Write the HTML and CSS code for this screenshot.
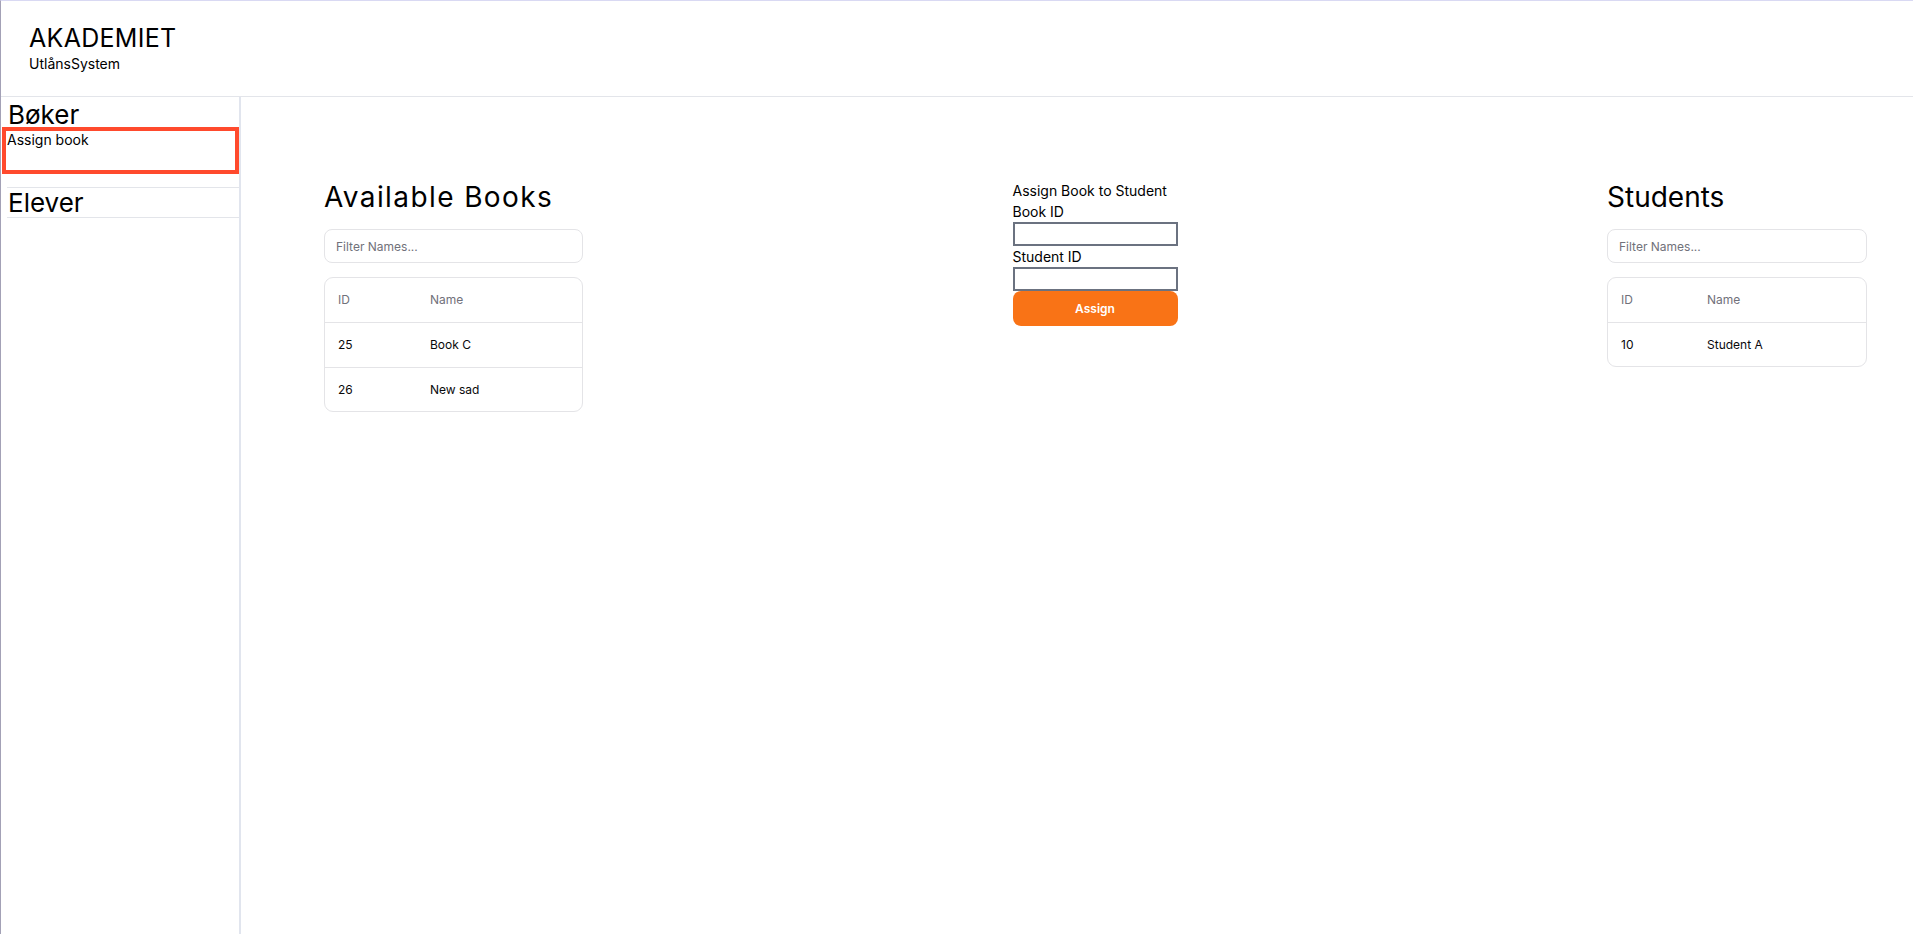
FILE: index.html
```html
<!DOCTYPE html>
<html lang="no">
<head>
<meta charset="utf-8">
<title>Akademiet – UtlånsSystem</title>
<link rel="stylesheet" href="styles.css">
</head>
<body>
<div class="app">
  <header class="topbar">
    <div class="brand">AKADEMIET</div>
    <div class="brand-sub">UtlånsSystem</div>
  </header>
  <div class="body-row">
    <nav class="sidebar">
      <div class="nav-section">
        <div class="nav-title">Bøker</div>
        <a class="nav-link active" href="#">Assign book</a>
      </div>
      <div class="nav-section nav-section-plain">
        <div class="nav-title">Elever</div>
      </div>
    </nav>
    <main class="main">
      <section class="col col-books">
        <h2 class="col-title">Available Books</h2>
        <input class="filter" type="text" placeholder="Filter Names...">
        <div class="table-wrap">
          <table class="data-table">
            <thead>
              <tr><th class="c-id-books">ID</th><th>Name</th></tr>
            </thead>
            <tbody>
              <tr><td>25</td><td>Book C</td></tr>
              <tr><td>26</td><td>New sad</td></tr>
            </tbody>
          </table>
        </div>
      </section>
      <section class="col col-form">
        <div class="form-title">Assign Book to Student</div>
        <label class="form-label" for="bookId">Book ID</label>
        <input class="form-input" id="bookId" type="text">
        <label class="form-label" for="studentId">Student ID</label>
        <input class="form-input" id="studentId" type="text">
        <button class="btn-assign" type="button">Assign</button>
      </section>
      <section class="col col-students">
        <h2 class="col-title">Students</h2>
        <input class="filter" type="text" placeholder="Filter Names...">
        <div class="table-wrap">
          <table class="data-table">
            <thead>
              <tr><th class="c-id-students">ID</th><th>Name</th></tr>
            </thead>
            <tbody>
              <tr><td>10</td><td>Student A</td></tr>
            </tbody>
          </table>
        </div>
      </section>
    </main>
  </div>
</div>
</body>
</html>
```
FILE: styles.css
```css
* { box-sizing: border-box; }

html, body {
  margin: 0;
  padding: 0;
  height: 100%;
}

body {
  font-family: Inter, "Noto Sans", "Liberation Sans", sans-serif;
  color: #000;
  background: #fff;
  border-top: 1px solid #d9d9f3;
  border-left: 1px solid #a3a1b6;
}

.app {
  height: 100%;
  display: flex;
  flex-direction: column;
}

.topbar {
  height: 96px;
  flex: 0 0 96px;
  border-bottom: 1px solid #e3e5ea;
  padding: 22px 0 0 28px;
}

.brand {
  font-size: 25px;
  line-height: 30px;
  letter-spacing: 0.3px;
}

.brand-sub {
  font-size: 14px;
  line-height: 20px;
  margin-top: 1px;
}

.body-row {
  flex: 1;
  display: flex;
  min-height: 0;
}

.sidebar {
  width: 240px;
  flex: 0 0 240px;
  border-right: 2px solid #e1e5ee;
  padding-left: 6px;
}

.nav-section {
  border-bottom: 1px solid #e3e5ea;
  padding-bottom: 13px;
}

.nav-section-plain {
  padding-bottom: 0;
}

.nav-title {
  font-size: 26px;
  line-height: 25px;
  padding-top: 5px;
  padding-left: 1px;
}

.nav-section-plain .nav-title {
  padding-top: 0;
  line-height: 29px;
}

.nav-link {
  display: block;
  margin-left: -5px;
  height: 47px;
  border: 4px solid #ff4a2d;
  padding: 0 0 0 1px;
  font-size: 14px;
  line-height: 17px;
  color: #000;
  text-decoration: none;
}

.main {
  flex: 1;
  display: flex;
  justify-content: space-between;
  align-items: flex-start;
  padding: 84px 46px 0 83px;
}

.col-books { width: 259px; }
.col-students { width: 260px; }
.col-form { width: 165px; display: flex; flex-direction: column; }

.col-title {
  margin: 0 0 16px;
  font-size: 28px;
  line-height: 33px;
  font-weight: 400;
}

.col-books .col-title { letter-spacing: 1.4px; }

.filter {
  display: block;
  width: 100%;
  height: 34px;
  margin: -1px 0 14px;
  padding: 0 11px;
  border: 1px solid #e4e4e7;
  border-radius: 8px;
  font-family: inherit;
  font-size: 12px;
  color: #09090b;
  background: #fff;
  outline: none;
}

.filter::placeholder { color: #71717a; }

.table-wrap {
  border: 1px solid #e4e4e7;
  border-radius: 9px;
  overflow: hidden;
}

.data-table {
  width: 100%;
  border-collapse: collapse;
  font-size: 12px;
}

.data-table th,
.data-table td {
  text-align: left;
  padding: 0 13px;
  height: 45px;
  border-bottom: 1px solid #e4e4e7;
}

.data-table th {
  height: 44px;
  font-weight: 400;
  color: #71717a;
}

.data-table td { color: #09090b; }

.data-table tbody tr:last-child td { border-bottom: none; height: 44px; }

.c-id-books { width: 92px; }
.c-id-students { width: 86px; }

.form-title {
  font-size: 14px;
  line-height: 20px;
}

.form-label {
  font-size: 14px;
  line-height: 21px;
}

.form-input {
  display: block;
  width: 165px;
  height: 24px;
  margin: 0;
  border: 2px solid #6b7280;
  border-radius: 0;
  padding: 0 2px;
  font-family: inherit;
  font-size: 13px;
  background: #fff;
}

.btn-assign {
  display: block;
  width: 165px;
  height: 35px;
  margin: 0;
  border: none;
  border-radius: 8px;
  background: #f97316;
  color: #fff;
  font-family: inherit;
  font-size: 12px;
  font-weight: 600;
}
```
